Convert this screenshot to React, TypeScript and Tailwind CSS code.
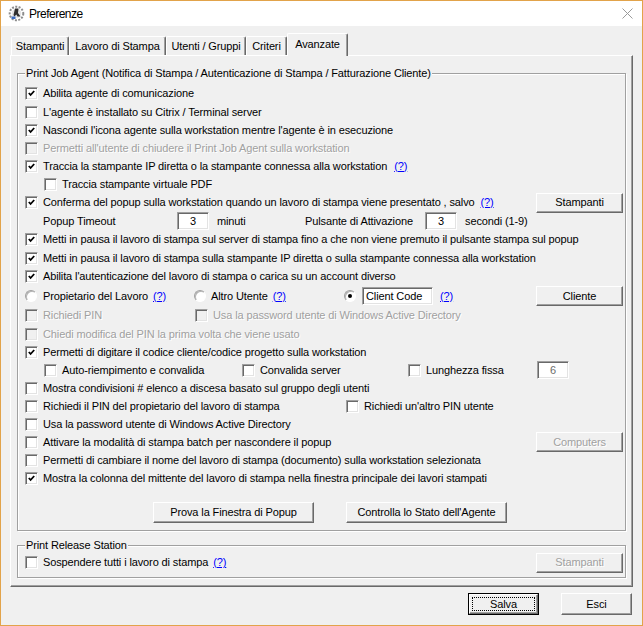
import type { ReactNode } from 'react'

const dim = 'text-[#a0a0a0] [text-shadow:1px_1px_0_#fff]'

function Box({ checked, disabled }: { checked?: boolean; disabled?: boolean }) {
  return (
    <span
      className={`relative inline-block h-[13px] w-[13px] shrink-0 border border-t-[#a0a0a0] border-l-[#a0a0a0] border-b-white border-r-white shadow-[inset_1px_1px_0_#696969,inset_-1px_-1px_0_#e3e3e3] ${
        disabled ? 'bg-[#f0f0f0]' : 'bg-white'
      }`}
    >
      {checked ? (
        <svg className="absolute left-[2px] top-[2px]" width="7" height="7" viewBox="0 0 7 7">
          <polyline points="0.8,3 2.6,5 6.2,1" fill="none" stroke="#000" strokeWidth="1.8" />
        </svg>
      ) : null}
    </span>
  )
}

function Radio({ checked }: { checked?: boolean }) {
  return (
    <span className="relative inline-block h-[12px] w-[12px] shrink-0 rounded-full border border-t-[#a0a0a0] border-l-[#a0a0a0] border-b-white border-r-white bg-white shadow-[inset_1px_1px_0_#b5b5b5]">
      {checked ? <span className="absolute left-[3px] top-[3px] h-[4px] w-[4px] rounded-full bg-black" /> : null}
    </span>
  )
}

function Help() {
  return <span className="text-[#0000ff] underline">(?)</span>
}

function Btn({ children, className, disabled }: { children: ReactNode; className: string; disabled?: boolean }) {
  return (
    <div
      className={`flex shrink-0 items-center justify-center border border-t-white border-l-white border-r-[#696969] border-b-[#696969] bg-[#f0f0f0] shadow-[inset_-1px_-1px_0_#a0a0a0] ${className} ${
        disabled ? dim : ''
      }`}
    >
      {children}
    </div>
  )
}

function Field({ children, className }: { children?: ReactNode; className: string }) {
  return (
    <div
      className={`flex h-[18px] shrink-0 items-center border border-t-[#a0a0a0] border-l-[#a0a0a0] border-b-white border-r-white bg-white shadow-[inset_1px_1px_0_#696969,inset_-1px_-1px_0_#e3e3e3] ${className}`}
    >
      {children}
    </div>
  )
}

function Check({ label, checked, disabled }: { label: string; checked?: boolean; disabled?: boolean }) {
  return (
    <>
      <Box checked={checked} disabled={disabled} />
      <span className={`ml-[5px] whitespace-nowrap ${disabled ? dim : ''}`}>{label}</span>
    </>
  )
}

export default function App() {
  const tabs = [
    { label: 'Stampanti', w: 'w-[58px]' },
    { label: 'Lavoro di Stampa', w: 'w-[97px]' },
    { label: 'Utenti / Gruppi', w: 'w-[80px]' },
    { label: 'Criteri', w: 'w-[41px]' },
  ]

  return (
    <div className="flex h-[626px] w-[643px] flex-col border border-[#e2a34a] bg-[#f0f0f0] font-['Liberation_Sans',Arial,sans-serif] text-[11px] leading-none tracking-[-0.12px] text-black">
      {/* Title bar */}
      <div className="flex h-[25px] shrink-0 items-center bg-white pl-[7px] pr-[9px]">
        <svg width="17" height="17" viewBox="0 0 17 17">
          <circle cx="8.5" cy="8.5" r="6.8" fill="none" stroke="#8c8c8c" strokeWidth="2" strokeDasharray="2 1.4" />
          <circle cx="8.5" cy="8.5" r="4.8" fill="#e4e4e4" />
          <path d="M7 3.5 L10.5 3.5 L10 8 L12.5 11.5 L9.5 11.5 L8.3 9.5 L6.5 11.5 L5.5 10 Z" fill="#2f2f2f" />
          <rect x="3.5" y="11.5" width="4" height="2.5" fill="#3b6cc2" />
        </svg>
        <span className="ml-[4px] text-[12px] tracking-[-0.5px]">Preferenze</span>
        <svg className="ml-auto" width="11" height="11" viewBox="0 0 11 11">
          <path d="M0.5 0.5 L10.5 10.5 M10.5 0.5 L0.5 10.5" stroke="#9a9a9a" strokeWidth="1" />
        </svg>
      </div>

      <div className="flex flex-1 flex-col px-[9px] pt-[7px]">
        {/* Tabs */}
        <div className="relative z-10 flex h-[22px] items-end pl-[1px]">
          {tabs.map((t) => (
            <div
              key={t.label}
              className={`flex h-[19px] items-center justify-center rounded-t-[2px] border-t border-l border-white border-r border-r-[#696969] shadow-[inset_-1px_0_0_#a0a0a0] ${t.w}`}
            >
              {t.label}
            </div>
          ))}
          <div className="-mb-px flex h-[23px] w-[61px] items-center justify-center rounded-t-[2px] border-t border-l border-white border-r border-r-[#696969] bg-[#f0f0f0] pb-[2px] shadow-[inset_-1px_0_0_#a0a0a0]">
            Avanzate
          </div>
        </div>

        {/* Tab panel */}
        <div className="flex h-[532px] w-[623px] flex-col border border-t-white border-l-white border-r-[#696969] border-b-[#696969] px-[6px] pt-[10px] shadow-[inset_-1px_-1px_0_#a0a0a0]">
          <fieldset className="border border-[#a0a0a0] pb-[7px] pl-[7px] pr-[2px] pt-[4px] shadow-[inset_1px_1px_0_#fff,1px_1px_0_#fff]">
            <legend className="bg-[#f0f0f0] px-[1px] leading-[14px]">
              Print Job Agent (Notifica di Stampa / Autenticazione di Stampa / Fatturazione Cliente)
            </legend>

            <div className="flex h-[19px] items-center">
              <Check checked label="Abilita agente di comunicazione" />
            </div>
            <div className="flex h-[18px] items-center">
              <Check label="L'agente è installato su Citrix / Terminal server" />
            </div>
            <div className="flex h-[18px] items-center">
              <Check checked label="Nascondi l'icona agente sulla workstation mentre l'agente è in esecuzione" />
            </div>
            <div className="flex h-[18px] items-center">
              <Check disabled label="Permetti all'utente di chiudere il Print Job Agent sulla workstation" />
            </div>
            <div className="flex h-[18px] items-center">
              <Check checked label="Traccia la stampante IP diretta o la stampante connessa alla workstation" />
              <span className="ml-[7px]">
                <Help />
              </span>
            </div>
            <div className="flex h-[18px] items-center pl-[19px]">
              <Check label="Traccia stampante virtuale PDF" />
            </div>
            <div className="flex h-[19px] items-center">
              <Check
                checked
                label="Conferma del popup sulla workstation quando un lavoro di stampa viene presentato , salvo"
              />
              <span className="ml-[6px]">
                <Help />
              </span>
              <Btn className="ml-auto h-[20px] w-[87px]">Stampanti</Btn>
            </div>
            <div className="flex h-[18px] items-center pl-[18px]">
              <span className="w-[134px]">Popup Timeout</span>
              <Field className="w-[32px] justify-center">3</Field>
              <span className="ml-[8px] w-[88px]">minuti</span>
              <span className="w-[120px]">Pulsante di Attivazione</span>
              <Field className="w-[32px] justify-center">3</Field>
              <span className="ml-[8px]">secondi (1-9)</span>
            </div>
            <div className="flex h-[19px] items-center">
              <Check
                checked
                label="Metti in pausa il lavoro di stampa sul server di stampa fino a che non viene premuto il pulsante stampa sul popup"
              />
            </div>
            <div className="flex h-[18px] items-center">
              <Check
                checked
                label="Metti in pausa il lavoro di stampa sulla stampante IP diretta o sulla stampante connessa alla workstation"
              />
            </div>
            <div className="flex h-[19px] items-center">
              <Check checked label="Abilita l'autenticazione del lavoro di stampa o carica su un account diverso" />
            </div>
            <div className="flex h-[20px] items-center">
              <div className="flex w-[169px] items-center">
                <Radio />
                <span className="ml-[6px]">Propietario del Lavoro</span>
                <span className="ml-[5px]">
                  <Help />
                </span>
              </div>
              <div className="flex w-[150px] items-center">
                <Radio />
                <span className="ml-[5px]">Altro Utente</span>
                <span className="ml-[5px]">
                  <Help />
                </span>
              </div>
              <Radio checked />
              <Field className="ml-[6px] w-[71px] pl-[3px]">Client Code</Field>
              <span className="ml-[7px]">
                <Help />
              </span>
              <Btn className="ml-auto h-[20px] w-[87px]">Cliente</Btn>
            </div>
            <div className="flex h-[19px] items-center">
              <div className="flex w-[170px] items-center">
                <Check disabled label="Richiedi PIN" />
              </div>
              <Check disabled label="Usa la password utente di Windows Active Directory" />
            </div>
            <div className="flex h-[18px] items-center">
              <Check disabled label="Chiedi modifica del PIN la prima volta che viene usato" />
            </div>
            <div className="flex h-[18px] items-center">
              <Check checked label="Permetti di digitare il codice cliente/codice progetto sulla workstation" />
            </div>
            <div className="flex h-[18px] items-center pl-[19px]">
              <div className="flex w-[198px] items-center">
                <Check label="Auto-riempimento e convalida" />
              </div>
              <div className="flex w-[166px] items-center">
                <Check label="Convalida server" />
              </div>
              <div className="flex w-[129px] items-center">
                <Check label="Lunghezza fissa" />
              </div>
              <Field className="w-[32px] justify-center text-[#6d6d6d]">6</Field>
            </div>
            <div className="flex h-[18px] items-center">
              <Check label="Mostra condivisioni # elenco a discesa basato sul gruppo degli utenti" />
            </div>
            <div className="flex h-[18px] items-center">
              <div className="flex w-[321px] items-center">
                <Check label="Richiedi il PIN del propietario del lavoro di stampa" />
              </div>
              <Check label="Richiedi un'altro PIN utente" />
            </div>
            <div className="flex h-[18px] items-center">
              <Check label="Usa la password utente di Windows Active Directory" />
            </div>
            <div className="flex h-[18px] items-center">
              <Check label="Attivare la modalità di stampa batch per nascondere il popup" />
              <Btn disabled className="ml-auto h-[20px] w-[87px]">
                Computers
              </Btn>
            </div>
            <div className="flex h-[18px] items-center">
              <Check label="Permetti di cambiare il nome del lavoro di stampa (documento) sulla workstation selezionata" />
            </div>
            <div className="flex h-[18px] items-center">
              <Check
                checked
                label="Mostra la colonna del mittente del lavoro di stampa nella finestra principale dei lavori stampati"
              />
            </div>

            <div className="mt-[15px] flex gap-[32px] pl-[128px]">
              <Btn className="h-[21px] w-[161px]">Prova la Finestra di Popup</Btn>
              <Btn className="h-[21px] w-[161px]">Controlla lo Stato dell'Agente</Btn>
            </div>
          </fieldset>

          <fieldset className="mt-[7px] border border-[#a0a0a0] pb-[4px] pl-[7px] pr-[2px] shadow-[inset_1px_1px_0_#fff,1px_1px_0_#fff]">
            <legend className="bg-[#f0f0f0] px-[1px] leading-[14px]">Print Release Station</legend>
            <div className="flex h-[21px] items-center">
              <Check label="Sospendere tutti i lavoro di stampa" />
              <span className="ml-[5px]">
                <Help />
              </span>
              <Btn disabled className="ml-auto h-[20px] w-[87px]">
                Stampanti
              </Btn>
            </div>
          </fieldset>
        </div>

        {/* Dialog buttons */}
        <div className="mt-[6px] flex justify-end gap-[22px] pr-[1px]">
          <div className="h-[22px] w-[71px] border border-black">
            <div className="flex h-full w-full items-center justify-center border border-t-white border-l-white border-r-[#696969] border-b-[#696969] p-[2px] shadow-[inset_-1px_-1px_0_#a0a0a0]">
              <div className="flex h-full w-full items-center justify-center border border-dotted border-black">
                Salva
              </div>
            </div>
          </div>
          <Btn className="h-[22px] w-[71px]">Esci</Btn>
        </div>
      </div>
    </div>
  )
}
